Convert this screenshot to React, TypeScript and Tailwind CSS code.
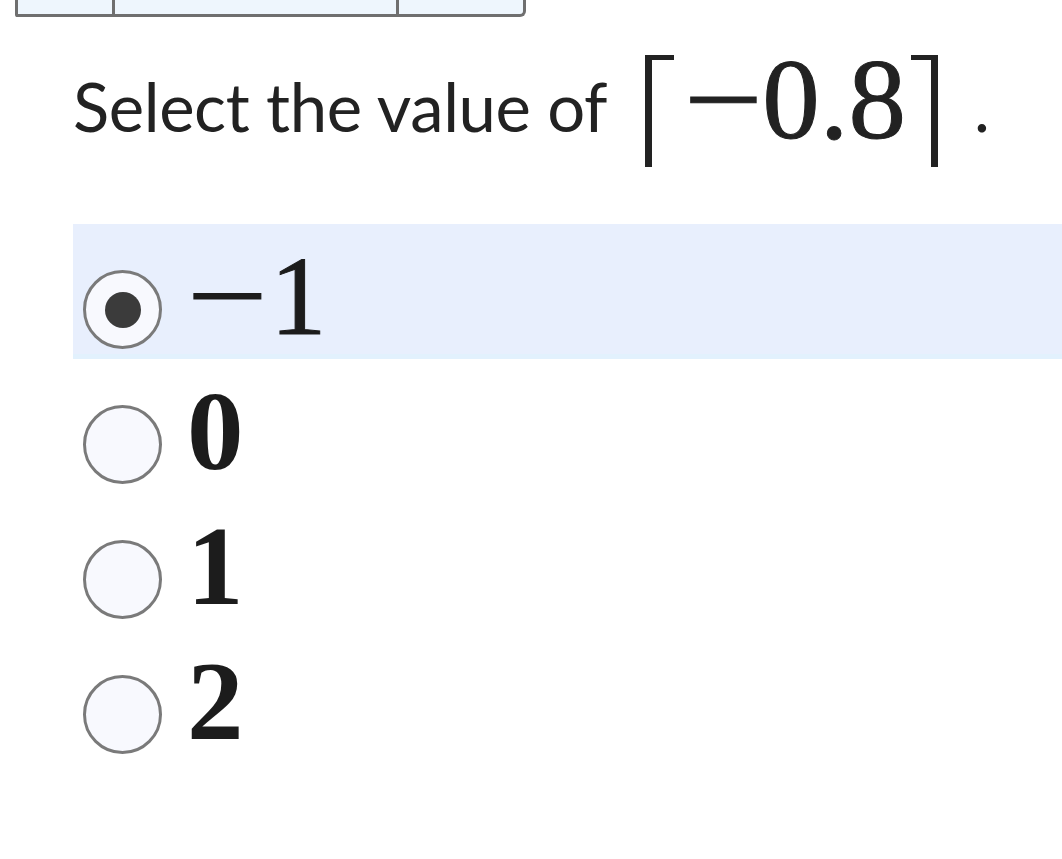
import React from "react";

function Radio({ checked }: { checked?: boolean }) {
  return (
    <div className="w-[79px] h-[79px] shrink-0 rounded-full border-[3px] border-[#7a7a7a] bg-[#f8f9fe] flex items-center justify-center">
      {checked && <div className="w-[36px] h-[36px] rounded-full bg-[#3b3b3b]" />}
    </div>
  );
}

const serif = "font-['Liberation_Serif','Times_New_Roman',serif]";

export default function App() {
  const options = [
    { label: "−1", checked: true },
    { label: "0" },
    { label: "1" },
    { label: "2" },
  ];
  return (
    <div className="w-[1062px] h-[859px] bg-white overflow-hidden font-['Lato',sans-serif] text-[#222]">
      {/* partially visible table at top */}
      <div className="ml-[15px] w-[511px] h-[17px] flex border-x-[3px] border-b-[3px] border-[#6f6f6f] rounded-br-[6px] rounded-bl-[2px] bg-[#eef6fd]">
        <div className="w-[97px] border-r-[3px] border-[#6f6f6f]" />
        <div className="w-[284px] border-r-[3px] border-[#6f6f6f]" />
        <div className="flex-1" />
      </div>

      {/* question */}
      <div className="mt-[38px] pl-[73px] flex items-start h-[112px]">
        <span className="mt-[18px] text-[67px] leading-[67px] tracking-[-0.4px] whitespace-nowrap">Select the value of</span>
        <span className="ml-[38px] w-[29px] h-[112px] border-l-[7px] border-t-[5px] border-[#222] shrink-0" />
        <span className={`${serif} ml-[10px] mt-[-13px] text-[115px] leading-[115px] whitespace-nowrap flex [-webkit-text-stroke:1px_#222]`}>
          <span className="inline-block w-[78px] text-left">
            <span className="inline-block origin-left scale-x-[1.22]">−</span>
          </span>
          <span>0.8</span>
        </span>
        <span className="ml-[5px] w-[27px] h-[112px] border-r-[7px] border-t-[5px] border-[#222] shrink-0" />
        <span className="ml-[36px] mt-[18px] text-[67px] leading-[67px]">.</span>
      </div>

      {/* options */}
      <div className="mt-[57px] ml-[73px] flex flex-col">
        {options.map((o, i) => (
          <div
            key={i}
            className={`h-[135px] pt-[46px] pl-[10px] flex items-start ${
              o.checked ? "bg-[#e8effd] border-b-[5px] border-[#e2f1fd]" : ""
            }`}
          >
            <Radio checked={o.checked} />
            <span
              className={`${serif} ml-[25px] mt-[-31px] text-[113px] leading-[113px] whitespace-nowrap text-[#1c1c1c] ${
                o.checked ? "font-normal [-webkit-text-stroke:1px_#1c1c1c]" : "font-bold"
              }`}
            >
              {o.checked ? (
                <>
                  <span className="inline-block w-[83px]">
                    <span className="inline-block origin-left scale-x-[1.27]">−</span>
                  </span>
                  1
                </>
              ) : (
                o.label
              )}
            </span>
          </div>
        ))}
      </div>
    </div>
  );
}
